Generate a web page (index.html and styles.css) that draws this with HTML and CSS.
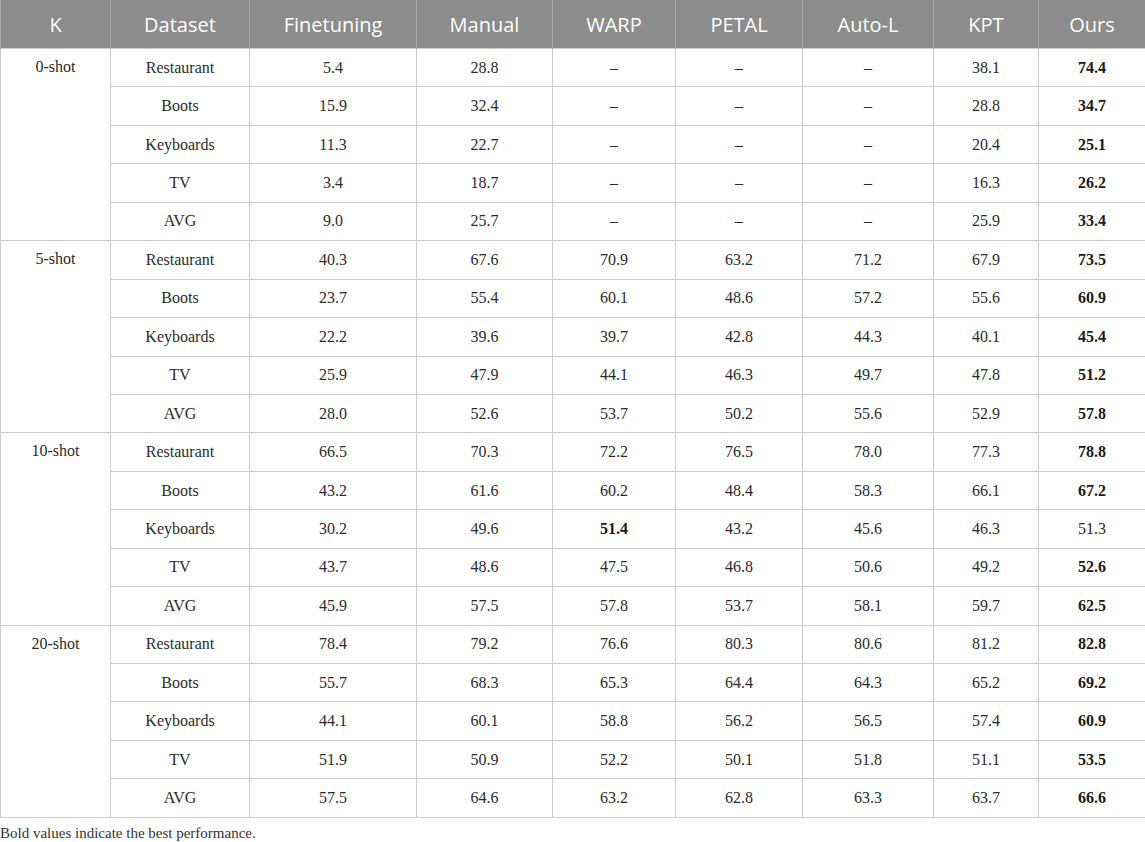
FILE: index.html
```html
<!DOCTYPE html>
<html>
<head>
<meta charset="utf-8">
<link rel="stylesheet" href="styles.css">
</head>
<body>
<table class="results">
<colgroup>
<col class="c-k"><col class="c-ds"><col class="c-ft"><col class="c-man"><col class="c-warp"><col class="c-petal"><col class="c-auto"><col class="c-kpt"><col class="c-ours">
</colgroup>
<thead>
<tr><th>K</th><th>Dataset</th><th>Finetuning</th><th>Manual</th><th>WARP</th><th>PETAL</th><th>Auto-L</th><th>KPT</th><th>Ours</th></tr>
</thead>
<tbody>
<tr><td class="k" rowspan="5">0-shot</td><td>Restaurant</td><td>5.4</td><td>28.8</td><td>–</td><td>–</td><td>–</td><td>38.1</td><td><b>74.4</b></td></tr>
<tr><td>Boots</td><td>15.9</td><td>32.4</td><td>–</td><td>–</td><td>–</td><td>28.8</td><td><b>34.7</b></td></tr>
<tr><td>Keyboards</td><td>11.3</td><td>22.7</td><td>–</td><td>–</td><td>–</td><td>20.4</td><td><b>25.1</b></td></tr>
<tr><td>TV</td><td>3.4</td><td>18.7</td><td>–</td><td>–</td><td>–</td><td>16.3</td><td><b>26.2</b></td></tr>
<tr><td>AVG</td><td>9.0</td><td>25.7</td><td>–</td><td>–</td><td>–</td><td>25.9</td><td><b>33.4</b></td></tr>

<tr><td class="k" rowspan="5">5-shot</td><td>Restaurant</td><td>40.3</td><td>67.6</td><td>70.9</td><td>63.2</td><td>71.2</td><td>67.9</td><td><b>73.5</b></td></tr>
<tr><td>Boots</td><td>23.7</td><td>55.4</td><td>60.1</td><td>48.6</td><td>57.2</td><td>55.6</td><td><b>60.9</b></td></tr>
<tr><td>Keyboards</td><td>22.2</td><td>39.6</td><td>39.7</td><td>42.8</td><td>44.3</td><td>40.1</td><td><b>45.4</b></td></tr>
<tr><td>TV</td><td>25.9</td><td>47.9</td><td>44.1</td><td>46.3</td><td>49.7</td><td>47.8</td><td><b>51.2</b></td></tr>
<tr><td>AVG</td><td>28.0</td><td>52.6</td><td>53.7</td><td>50.2</td><td>55.6</td><td>52.9</td><td><b>57.8</b></td></tr>

<tr><td class="k" rowspan="5">10-shot</td><td>Restaurant</td><td>66.5</td><td>70.3</td><td>72.2</td><td>76.5</td><td>78.0</td><td>77.3</td><td><b>78.8</b></td></tr>
<tr><td>Boots</td><td>43.2</td><td>61.6</td><td>60.2</td><td>48.4</td><td>58.3</td><td>66.1</td><td><b>67.2</b></td></tr>
<tr><td>Keyboards</td><td>30.2</td><td>49.6</td><td><b>51.4</b></td><td>43.2</td><td>45.6</td><td>46.3</td><td>51.3</td></tr>
<tr><td>TV</td><td>43.7</td><td>48.6</td><td>47.5</td><td>46.8</td><td>50.6</td><td>49.2</td><td><b>52.6</b></td></tr>
<tr><td>AVG</td><td>45.9</td><td>57.5</td><td>57.8</td><td>53.7</td><td>58.1</td><td>59.7</td><td><b>62.5</b></td></tr>

<tr><td class="k" rowspan="5">20-shot</td><td>Restaurant</td><td>78.4</td><td>79.2</td><td>76.6</td><td>80.3</td><td>80.6</td><td>81.2</td><td><b>82.8</b></td></tr>
<tr><td>Boots</td><td>55.7</td><td>68.3</td><td>65.3</td><td>64.4</td><td>64.3</td><td>65.2</td><td><b>69.2</b></td></tr>
<tr><td>Keyboards</td><td>44.1</td><td>60.1</td><td>58.8</td><td>56.2</td><td>56.5</td><td>57.4</td><td><b>60.9</b></td></tr>
<tr><td>TV</td><td>51.9</td><td>50.9</td><td>52.2</td><td>50.1</td><td>51.8</td><td>51.1</td><td><b>53.5</b></td></tr>
<tr><td>AVG</td><td>57.5</td><td>64.6</td><td>63.2</td><td>62.8</td><td>63.3</td><td>63.7</td><td><b>66.6</b></td></tr>
</tbody>
</table>
<p class="note">Bold values indicate the best performance.</p>
</body>
</html>
```

FILE: styles.css
```css
html, body {
  margin: 0;
  padding: 0;
  background: #ffffff;
}
.results {
  width: 1145px;
  border-collapse: collapse;
  table-layout: fixed;
  font-family: "Liberation Serif", "Times New Roman", serif;
  font-size: 16px;
  color: #2b2b2b;
}
.c-k { width: 110px; }
.c-ds { width: 139px; }
.c-ft { width: 167px; }
.c-man { width: 136px; }
.c-warp { width: 123px; }
.c-petal { width: 127px; }
.c-auto { width: 131px; }
.c-kpt { width: 105px; }
.c-ours { width: 107px; }

.results th {
  height: 48px;
  padding: 0;
  background: #8c8c8c;
  color: #ffffff;
  font-family: "Open Sans", "Noto Sans", sans-serif;
  font-weight: 400;
  font-size: 20px;
  text-align: center;
  vertical-align: middle;
  border-left: 1px solid #a9a9a9;
  border-right: 1px solid #a9a9a9;
}
.results td {
  height: 38.45px;
  padding: 0;
  text-align: center;
  vertical-align: middle;
  border: 1px solid #cbcbcb;
  box-sizing: border-box;
}
.results td.k {
  vertical-align: top;
  padding-top: 9px;
}
.results b {
  font-weight: 700;
  color: #1a1a1a;
}
.note {
  margin: 7px 0 0 0;
  font-family: "Liberation Serif", "Times New Roman", serif;
  font-size: 15px;
  color: #333333;
}
```
